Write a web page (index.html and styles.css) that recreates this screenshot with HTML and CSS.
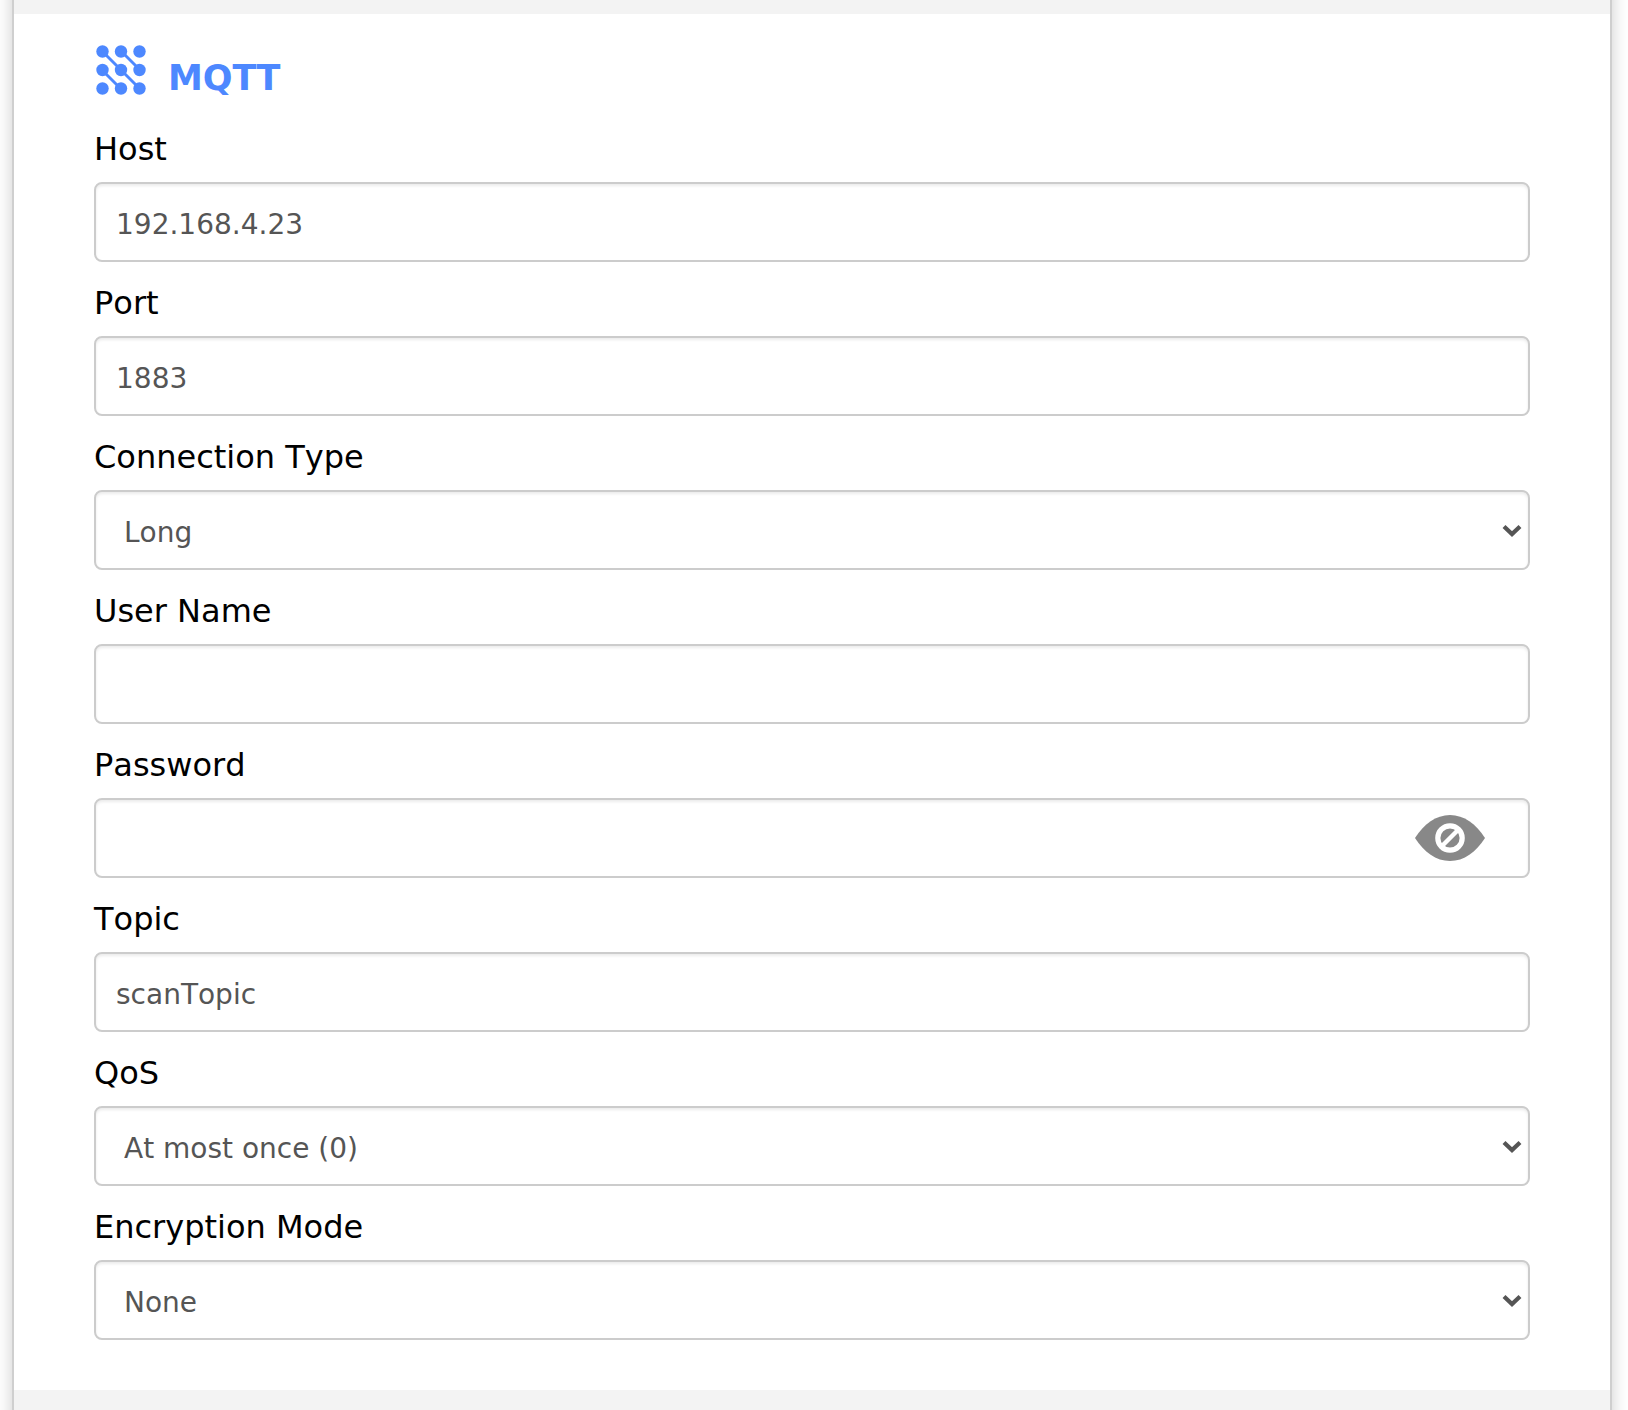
FILE: index.html
```html
<!DOCTYPE html>
<html lang="en">
<head>
<meta charset="utf-8">
<title>MQTT</title>
<link rel="stylesheet" href="styles.css">
</head>
<body>
<div class="page">
  <main class="card">
    <form class="panel">
      <div class="panel-header">
        <svg class="logo" viewBox="0 0 50 50" aria-hidden="true">
          <path d="M6 6L44 44M25 6L44 25M6 25L25 44" stroke="currentColor" stroke-width="2.9"/>
          <g fill="currentColor">
            <circle cx="6.5" cy="6.5" r="6.2"/><circle cx="25" cy="6.5" r="6.2"/><circle cx="43.5" cy="6.5" r="6.2"/>
            <circle cx="6.5" cy="25" r="6.2"/><circle cx="25" cy="25" r="6.2"/><circle cx="43.5" cy="25" r="6.2"/>
            <circle cx="6.5" cy="43.5" r="6.2"/><circle cx="25" cy="43.5" r="6.2"/><circle cx="43.5" cy="43.5" r="6.2"/>
          </g>
        </svg>
        <h2 class="title">MQTT</h2>
      </div>
      <div class="fields">
        <div class="field">
          <label class="label" for="host">Host</label>
          <input class="control" id="host" type="text" value="192.168.4.23">
        </div>
        <div class="field">
          <label class="label" for="port">Port</label>
          <input class="control" id="port" type="text" value="1883">
        </div>
        <div class="field">
          <label class="label" for="connection">Connection Type</label>
          <div class="control-wrap">
            <select class="control control-select" id="connection"><option>Long</option><option>Short</option></select>
            <svg class="chevron" viewBox="0 0 20 14" aria-hidden="true"><path d="M2 2.500L10 10L18 2.500" fill="none" stroke="currentColor" stroke-width="4.200"/></svg>
          </div>
        </div>
        <div class="field">
          <label class="label" for="username">User Name</label>
          <input class="control" id="username" type="text">
        </div>
        <div class="field">
          <label class="label" for="password">Password</label>
          <div class="control-wrap">
            <input class="control control-password" id="password" type="password">
            <button class="reveal" type="button" aria-label="Show password">
              <svg class="eye" viewBox="0 0 70 46" aria-hidden="true">
                <path d="M0 23C9 9 21 0 35 0S61 9 70 23C61 37 49 46 35 46S9 37 0 23Z" fill="#888"/>
                <circle cx="35" cy="23" r="12.2" fill="none" stroke="#fff" stroke-width="5.2"/>
                <path d="M27 31L43 15" stroke="#fff" stroke-width="4.5"/>
              </svg>
            </button>
          </div>
        </div>
        <div class="field">
          <label class="label" for="topic">Topic</label>
          <input class="control" id="topic" type="text" value="scanTopic">
        </div>
        <div class="field">
          <label class="label" for="qos">QoS</label>
          <div class="control-wrap">
            <select class="control control-select" id="qos"><option>At most once (0)</option><option>At least once (1)</option><option>Exactly once (2)</option></select>
            <svg class="chevron" viewBox="0 0 20 14" aria-hidden="true"><path d="M2 2.500L10 10L18 2.500" fill="none" stroke="currentColor" stroke-width="4.200"/></svg>
          </div>
        </div>
        <div class="field">
          <label class="label" for="encryption">Encryption Mode</label>
          <div class="control-wrap">
            <select class="control control-select" id="encryption"><option>None</option><option>TLS</option></select>
            <svg class="chevron" viewBox="0 0 20 14" aria-hidden="true"><path d="M2 2.500L10 10L18 2.500" fill="none" stroke="currentColor" stroke-width="4.200"/></svg>
          </div>
        </div>
      </div>
    </form>
  </main>
</div>
</body>
</html>
```
FILE: styles.css
```css
* {
  box-sizing: border-box;
}

body {
  margin: 0;
  background: #fff;
  color: #000;
  font-family: Verdana, "DejaVu Sans", sans-serif;
  font-kerning: none;
}

.page {
  min-height: 100vh;
  padding: 0 16px 0 12px;
  overflow: hidden;
}

/* The card runs past the top and bottom so its shadow stays even */
.card {
  margin: -24px 0;
  padding: 38px 0 44px;
  background: #f3f3f3;
  border: 2px solid #cfcfcf;
  border-width: 0 2px;
  box-shadow: 0 0 16px rgba(0, 0, 0, 0.2);
}

.panel {
  padding: 31px 80px 50px;
  background: #fff;
}

.panel-header {
  display: flex;
  align-items: flex-start;
  gap: 22px;
  margin-bottom: 17px;
  padding-left: 2px;
  color: #4d88ff;
}

.logo {
  width: 50px;
  height: 50px;
}

.title {
  margin: 0;
  font-size: 35px;
  line-height: 66px;
}

.fields {
  display: flex;
  flex-direction: column;
  gap: 20px;
}

.field {
  display: flex;
  flex-direction: column;
  gap: 12px;
}

.label {
  font-size: 32px;
  line-height: 42px;
}

.control {
  width: 100%;
  height: 80px;
  padding: 4px 20px 0;
  font: inherit;
  font-size: 28px;
  font-kerning: none;
  color: #555;
  background: #fff;
  border: 2px solid #ccc;
  border-radius: 8px;
  box-shadow: inset 0 2px 3px rgba(0, 0, 0, 0.08);
}

.control-wrap {
  position: relative;
  display: flex;
}

.control-select {
  appearance: none;
  padding: 4px 48px 0 28px;
}

.control-password {
  padding-right: 124px;
}

.chevron {
  position: absolute;
  top: 34px;
  right: 8px;
  width: 20px;
  height: 14px;
  color: #555;
  pointer-events: none;
}

.reveal {
  position: absolute;
  top: 17px;
  right: 45px;
  padding: 0;
  background: none;
  border: 0;
}

.eye {
  display: block;
  width: 70px;
  height: 46px;
}
```
